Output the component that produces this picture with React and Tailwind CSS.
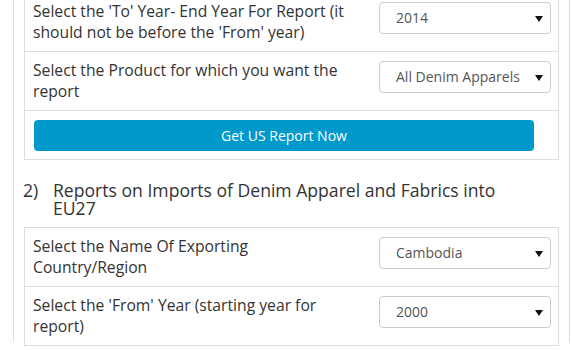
import React from "react";

const Arrow = () => (
  <svg width="8" height="6" viewBox="0 0 8 6" className="absolute right-[7px] top-[13px]">
    <path d="M0 0 L8 0 L4 6 Z" fill="#111" />
  </svg>
);

const Select = ({ value }) => (
  <div className="relative w-[172px] h-[32px] shrink-0 border border-[#cccccc] rounded-[4px] bg-white pl-[16px] text-[14px] leading-[30px] text-[#555555]">
    {value}
    <Arrow />
  </div>
);

const Row = ({ label, value }) => (
  <div className="flex justify-between border-b border-[#dddddd] pl-[8px] pr-[7px] pt-[8px] pb-[8px]">
    <div className="w-[318px] text-[15.7px] leading-[21px] text-[#333333]">{label}</div>
    <div className="pt-[1px]">
      <Select value={value} />
    </div>
  </div>
);

export default function App() {
  return (
    <div className="w-[572px] h-[350px] overflow-hidden bg-white" style={{ fontFamily: '"Open Sans", sans-serif' }}>
      <div className="ml-[13px] w-[557px] h-[350px] border-l border-r border-[#dddddd] pl-[10px] pr-[10px]">
        <div className="-mt-[8px] border border-[#dddddd] border-b-0">
          <Row label="Select the 'To' Year- End Year For Report (it should not be before the 'From' year)" value="2014" />
          <Row label="Select the Product for which you want the report" value="All Denim Apparels" />
          <div className="border-b border-[#dddddd] pl-[9px] pt-[9px] pb-[8px]">
            <button className="w-[500px] h-[31px] rounded-[4px] bg-[#0099cc] text-white text-[14px]">
              Get US Report Now
            </button>
          </div>
        </div>

        <div className="mt-[21px] mb-[10px] -ml-[1px] flex text-[17.6px] leading-[18px] text-[#333333] font-medium">
          <span className="w-[30px] shrink-0">2)</span>
          <span className="w-[455px]">Reports on Imports of Denim Apparel and Fabrics into EU27</span>
        </div>

        <div className="border border-[#dddddd] border-b-0">
          <Row label="Select the Name Of Exporting Country/Region" value="Cambodia" />
          <Row label="Select the 'From' Year (starting year for report)" value="2000" />
        </div>
      </div>
    </div>
  );
}
